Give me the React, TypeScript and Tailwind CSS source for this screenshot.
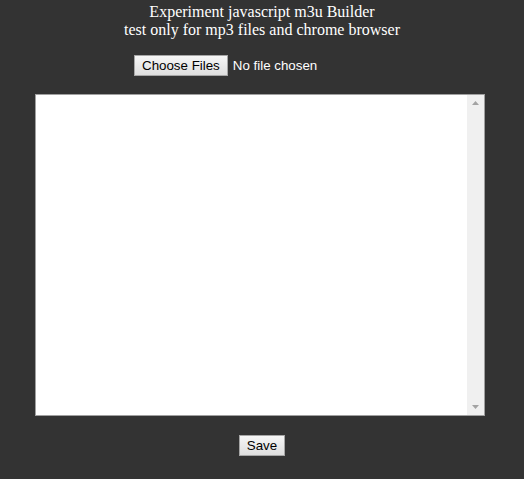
import React from 'react';

export default function App() {
  return (
    <div className="min-h-[479px] w-full bg-[#333333] flex flex-col items-center pt-[3px]" style={{ fontFamily: '"Liberation Sans", Arial, sans-serif' }}>
      {/* Heading */}
      <div className="text-center text-white text-[16px] leading-[18px]" style={{ fontFamily: '"Liberation Serif", "Times New Roman", serif' }}>
        <div>Experiment javascript m3u Builder</div>
        <div>test only for mp3 files and chrome browser</div>
      </div>

      {/* File picker: fixed-width like a native file input */}
      <div className="mt-[16px] w-[256px] flex items-center gap-[5px] text-[13.333px] text-white">
        <button className="h-[21px] px-[7px] border border-[#a6a6a6] bg-gradient-to-b from-[#f6f6f6] to-[#dedede] text-black leading-none">
          Choose Files
        </button>
        <span>No file chosen</span>
      </div>

      {/* Playlist box */}
      <div className="mt-[18px] ml-[-4px] w-[450px] h-[322px] border border-[#a0a0a0] bg-white flex">
        <textarea className="flex-1 resize-none outline-none bg-white" />
        <div className="w-[17px] bg-[#f0f0f0] flex flex-col items-center justify-between py-[6px]">
          <svg width="7" height="4" viewBox="0 0 7 4"><path d="M3.5 0L7 4H0z" fill="#a3a3a3" /></svg>
          <svg width="7" height="4" viewBox="0 0 7 4"><path d="M0 0H7L3.5 4z" fill="#a3a3a3" /></svg>
        </div>
      </div>

      {/* Save */}
      <button className="mt-[19px] h-[21px] px-[7px] border border-[#a6a6a6] bg-gradient-to-b from-[#f6f6f6] to-[#dedede] text-black text-[13.333px] leading-none">
        Save
      </button>
    </div>
  );
}
